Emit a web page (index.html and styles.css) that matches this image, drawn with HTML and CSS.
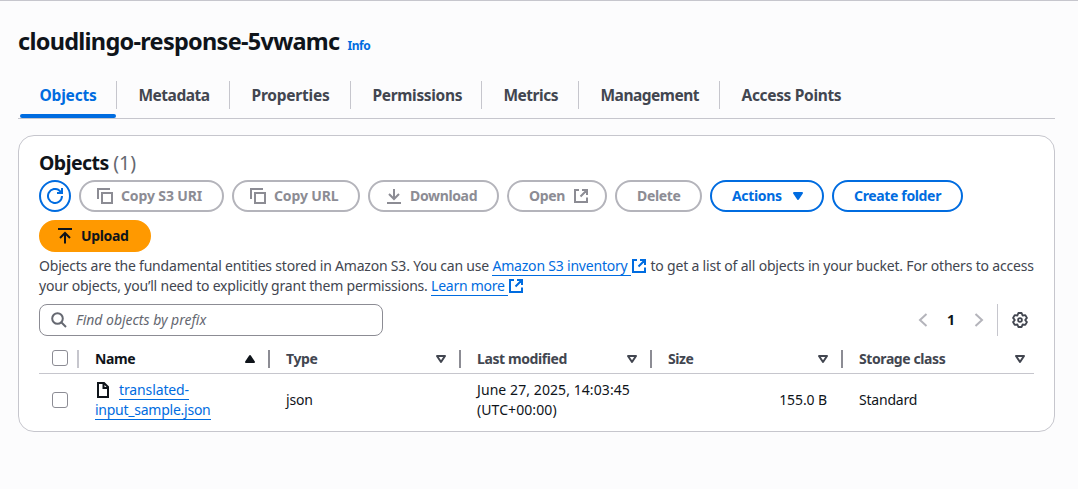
FILE: index.html
```html
<!DOCTYPE html>
<html lang="en">
<head>
<meta charset="utf-8">
<title>cloudlingo-response-5vwamc - S3 bucket</title>
<link rel="stylesheet" href="styles.css">
</head>
<body>
<svg class="sprite" aria-hidden="true">
  <symbol id="copy" viewBox="0 0 16 16"><path d="M1 11V1h12M5 5h10v10H5z" fill="none" stroke="currentColor" stroke-width="2"/></symbol>
  <symbol id="external" viewBox="0 0 16 16"><path d="M6 2H2v12h12V9.500M9 2h5v5M14 2 7.500 8.500" fill="none" stroke="currentColor" stroke-width="2"/></symbol>
  <symbol id="sort" viewBox="0 0 16 16"><path d="M4 5h8l-4 6z" fill="none" stroke="currentColor" stroke-width="2" stroke-linejoin="round"/></symbol>
</svg>
<main class="page">
  <header class="title-row">
    <h1 class="title">cloudlingo-response-5vwamc</h1>
    <a class="info">Info</a>
  </header>
  <nav class="tabs">
    <a class="tab tab-objects active"><span>Objects</span></a>
    <a class="tab tab-metadata"><span>Metadata</span></a>
    <a class="tab tab-properties"><span>Properties</span></a>
    <a class="tab tab-permissions"><span>Permissions</span></a>
    <a class="tab tab-metrics"><span>Metrics</span></a>
    <a class="tab tab-management"><span>Management</span></a>
    <a class="tab tab-access"><span>Access Points</span></a>
  </nav>
  <section class="card">
    <h2 class="heading">Objects <span class="count">(1)</span></h2>
    <div class="actions">
      <button class="btn refresh" aria-label="Refresh"><svg class="icon" viewBox="0 0 16 16"><path d="M15 8a7 7 0 1 1-2.400-5.300L14.300 5M15 0v5H10" fill="none" stroke="currentColor" stroke-width="2"/></svg></button>
      <button class="btn disabled copy-uri"><svg class="icon"><use href="#copy"/></svg><span>Copy S3 URI</span></button>
      <button class="btn disabled copy-url"><svg class="icon"><use href="#copy"/></svg><span>Copy URL</span></button>
      <button class="btn disabled download"><svg class="icon" viewBox="0 0 16 16"><path d="M8 1v9M3 6l5 5 5-5M1 15h14" fill="none" stroke="currentColor" stroke-width="2"/></svg><span>Download</span></button>
      <button class="btn disabled open"><span>Open</span><svg class="icon"><use href="#external"/></svg></button>
      <button class="btn disabled delete"><span>Delete</span></button>
      <button class="btn menu"><span>Actions</span><svg class="icon" viewBox="0 0 16 16"><path d="M4 5h8l-4 6z" fill="currentColor" stroke="currentColor" stroke-width="2" stroke-linejoin="round"/></svg></button>
      <button class="btn create"><span>Create folder</span></button>
      <button class="btn primary"><svg class="icon" viewBox="0 0 16 16"><path d="M1 1h14M8 15.500V5.500M3 10l5-5 5 5" fill="none" stroke="currentColor" stroke-width="2"/></svg><span>Upload</span></button>
    </div>
    <p class="description">Objects are the fundamental entities stored in Amazon S3. You can use <a class="link">Amazon S3 inventory </a><svg class="icon ext"><use href="#external"/></svg> <span class="rest">to get a list of all objects in your bucket. For others to access</span><br>your objects, you’ll need to explicitly grant them permissions. <a class="link learn">Learn more </a><svg class="icon ext"><use href="#external"/></svg></p>
    <div class="tools">
      <div class="search"><svg class="icon" viewBox="0 0 16 16"><circle cx="6.500" cy="6.500" r="5.300" fill="none" stroke="currentColor" stroke-width="2"/><path d="m10.500 10.500 4.500 4.500" stroke="currentColor" stroke-width="2"/></svg><span>Find objects by prefix</span></div>
      <div class="pager">
        <svg class="icon" viewBox="0 0 16 16"><path d="M11.500 2 5 8l6.500 6" fill="none" stroke="currentColor" stroke-width="2"/></svg>
        <span class="page-number">1</span>
        <svg class="icon" viewBox="0 0 16 16"><path d="M4.500 2 11 8l-6.500 6" fill="none" stroke="currentColor" stroke-width="2"/></svg>
      </div>
      <div class="settings"><svg class="icon" viewBox="0 0 16 16"><path d="M6.400 1h3.200l1 2.500 2.700-.4 1.600 2.800L13.200 8l1.700 2.100-1.600 2.800-2.700-.4-1 2.500H6.400l-1-2.500-2.700.4-1.600-2.800L2.800 8 1.100 5.900l1.600-2.800 2.700.4z" fill="none" stroke="currentColor" stroke-width="1.900" stroke-linejoin="round"/><circle cx="8" cy="8" r="1.900" fill="none" stroke="currentColor" stroke-width="1.800"/></svg></div>
    </div>
    <div class="table">
      <div class="row head">
        <div class="cell check"><i class="box"></i></div>
        <div class="cell sorted"><span>Name</span><svg class="icon" viewBox="0 0 16 16"><path d="M4 11h8L8 5z" fill="currentColor" stroke="currentColor" stroke-width="2" stroke-linejoin="round"/></svg></div>
        <div class="cell"><span>Type</span><svg class="icon"><use href="#sort"/></svg></div>
        <div class="cell"><span>Last modified</span><svg class="icon"><use href="#sort"/></svg></div>
        <div class="cell"><span>Size</span><svg class="icon"><use href="#sort"/></svg></div>
        <div class="cell"><span>Storage class</span><svg class="icon"><use href="#sort"/></svg></div>
      </div>
      <div class="row data">
        <div class="cell check"><i class="box"></i></div>
        <div class="cell"><div><svg class="icon file" viewBox="0 0 16 16"><path d="M3 1h6l4 4v10H3zM8.500 1v5H13" fill="none" stroke="currentColor" stroke-width="2"/></svg><a class="link translated">translated-</a><br><a class="link filename">input_sample.json</a></div></div>
        <div class="cell">json</div>
        <div class="cell date"><div>June 27, 2025, 14:03:45<br>(UTC+00:00)</div></div>
        <div class="cell size">155.0 B</div>
        <div class="cell">Standard</div>
      </div>
    </div>
  </section>
</main>
</body>
</html>
```

FILE: styles.css
```css
* { box-sizing: border-box; }
body {
  margin: 0;
  height: 489px;
  overflow: hidden;
  background: #fcfcfd;
  border-top: 1px solid #c6c6cd;
  color: #0f141a;
  font: 14px/20px "Noto Sans", "Open Sans", sans-serif;
  letter-spacing: -0.21px;
}
.sprite { display: none; }
.icon { width: 16px; height: 16px; flex: none; display: block; }
.page { padding: 24px 23px 0 18px; }

.title-row { display: flex; align-items: baseline; gap: 8px; height: 32px; }
.title { margin: 0; font-size: 23.5px; line-height: 32px; font-weight: 700; letter-spacing: -0.73px; }
.info { color: #006ce0; font-size: 12px; font-weight: 700; letter-spacing: -0.45px; }

.tabs { display: flex; height: 62px; padding-top: 24px; border-bottom: 1px solid #c6c6cd; }
.tab {
  display: flex;
  flex-direction: column;
  height: 37px;
  color: #424650;
  font-size: 15.5px;
  line-height: 29px;
  font-weight: 700;
  letter-spacing: -0.5px;
}
.tab span { padding-left: 21.500px; height: 28px; border-right: 1px solid #c6c6cd; white-space: nowrap; }
.tab-objects { width: 99px; letter-spacing: -0.2px; }
.tab-metadata { width: 113px; }
.tab-properties { width: 121px; letter-spacing: -0.23px; }
.tab-permissions { width: 131px; letter-spacing: -0.33px; }
.tab-metrics { width: 97px; }
.tab-management { width: 141px; }
.tab-access { letter-spacing: -0.33px; }
.tab-access span { border: 0; }
.active { color: #006ce0; }
.active::after { content: ""; height: 4px; margin: 5px 1px 0 2px; border-radius: 2px; background: #006ce0; }

.card { margin-top: 16px; height: 297px; padding: 14px 20px 0; border: 1px solid #c6c6cd; border-radius: 16px; background: #fff; }
.heading { margin: 0; height: 30px; font-size: 19.5px; line-height: 26px; font-weight: 700; letter-spacing: -0.55px; }
.count { color: #656871; font-weight: 400; letter-spacing: 0; }
.actions { display: flex; flex-wrap: wrap; gap: 8px; }
.btn {
  display: flex;
  align-items: center;
  gap: 8px;
  height: 32px;
  padding: 0 16px;
  border: 2px solid #006ce0;
  border-radius: 16px;
  background: #fff;
  color: #006ce0;
  font: inherit;
  font-weight: 700;
  letter-spacing: -0.35px;
  white-space: nowrap;
}
.btn.refresh { width: 32px; padding: 0 6px; }
.btn.disabled { border-color: #b4b4bb; color: #8c8c94; }
.btn.copy-uri { width: 145px; letter-spacing: -0.12px; }
.btn.copy-url { width: 128px; letter-spacing: -0.12px; }
.btn.download { width: 131px; }
.btn.open { width: 100px; padding-left: 20px; }
.btn.delete { width: 87px; padding-left: 20px; }
.btn.menu { width: 114px; padding-left: 20px; }
.btn.create { width: 131px; padding-left: 20px; }
.btn.primary { width: 112px; border-color: #f90; background: #f90; color: #0f141a; }

.description { margin: 4px 0 8px; color: #424650; white-space: nowrap; letter-spacing: -0.203px; }
.rest { letter-spacing: -0.185px; }
.link { color: #006ce0; border-bottom: 1px solid #006ce0; white-space: pre; }
.learn { letter-spacing: -0.25px; }
.ext { display: inline-block; vertical-align: -3px; color: #006ce0; }

.tools { display: flex; align-items: center; height: 32px; }
.search {
  display: flex;
  align-items: center;
  gap: 8px;
  width: 344px;
  height: 32px;
  padding-left: 11px;
  border: 1px solid #8c8c94;
  border-radius: 8px;
  color: #656871;
  font-style: italic;
  letter-spacing: -0.02px;
}
.search span { padding-left: 1px; }
.pager { display: flex; align-items: center; justify-content: space-between; margin-left: auto; width: 72px; color: #b4b4bb; }
.page-number { color: #0f141a; font-weight: 700; }
.settings { display: flex; align-items: center; justify-content: flex-end; margin-left: 10px; width: 31px; height: 32px; margin-right: 6px; border-left: 1px solid #c6c6cd; color: #424650; }

.table { padding-top: 8px; }
.row { display: grid; grid-template-columns: 40px repeat(5, 191px); }
.head { width: 995px; height: 30px; border-bottom: 1px solid #c6c6cd; color: #424650; font-weight: 700; letter-spacing: -0.41px; }
.cell { display: flex; align-items: center; padding: 0 10px 0 16px; }
.head .cell { justify-content: space-between; height: 18px; margin-top: 6px; border-right: 2px solid #8c8c94; }
.head .cell:last-child { border-color: transparent; padding-right: 4px; }
.cell.check { padding: 0 0 0 13px; }
.head .check { border-color: #c6c6cd; align-items: flex-start; }
.box { display: block; width: 16px; height: 16px; border: 1px solid #8c8c94; border-radius: 3px; background: #fff; }
.head .sorted { color: #0f141a; }
.data { height: 52px; }
.file { display: inline-block; vertical-align: -3px; margin-right: 8px; }
.date { letter-spacing: 0.08px; }
.translated { letter-spacing: -0.12px; }
.filename { letter-spacing: -0.25px; }
.size { justify-content: flex-end; padding-right: 16px; letter-spacing: -0.1px; }
```
